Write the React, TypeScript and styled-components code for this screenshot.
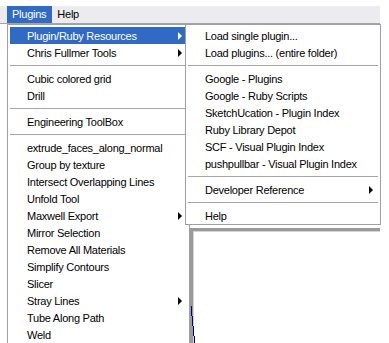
import React from "react";
import styled, { createGlobalStyle } from "styled-components";

const GlobalStyle = createGlobalStyle`
  html, body { margin: 0; padding: 0; background: #ffffff; }
  body {
    font-family: "Liberation Sans", Arial, sans-serif;
    font-size: 11px;
    letter-spacing: -0.25px;
    color: #000;
  }
  * { box-sizing: border-box; }
`;

const Page = styled.div`
  position: relative;
  width: 389px;
  height: 343px;
  overflow: hidden;
  background: #ffffff;
`;

const TopGap = styled.div`
  height: 6px;
`;

const MenuBar = styled.div`
  display: flex;
  width: 380px;
  height: 18px;
  padding-left: 7px;
  background: #ecebef;
  border-bottom: 1px solid #a4a4a4;
`;

const BarItem = styled.div<{ $active?: boolean }>`
  height: 17px;
  line-height: 17px;
  padding: 0 6px 0 5px;
  background: ${(p) => (p.$active ? "#316ac5" : "transparent")};
  color: ${(p) => (p.$active ? "#ffffff" : "#000000")};
`;

const Workspace = styled.div`
  display: flex;
  padding: 204px 0 0 190px;
`;

const Viewport = styled.div`
  position: relative;
  width: 190px;
  height: 140px;
  border-top: 3px solid #9a9a9a;
  border-left: 3px solid #9a9a9a;
  box-shadow: inset 1px 1px 0 #d4d4d4;
  background: #ffffff;
`;

const EdgeLine = styled.svg`
  position: absolute;
  left: -2px;
  top: 75px;
`;

const Menu = styled.div<{ $left: number; $top: number; $width: number }>`
  position: absolute;
  left: ${(p) => p.$left}px;
  top: ${(p) => p.$top}px;
  width: ${(p) => p.$width}px;
  padding: 2px 2px 0;
  background: #ffffff;
  border: 1px solid #a0a0a0;
`;

const Item = styled.div<{ $active?: boolean }>`
  display: flex;
  align-items: center;
  justify-content: space-between;
  height: 17px;
  padding: 0 5px 0 17px;
  white-space: nowrap;
  background: ${(p) => (p.$active ? "#316ac5" : "transparent")};
  color: ${(p) => (p.$active ? "#ffffff" : "#000000")};
`;

const Separator = styled.div`
  height: 9px;
  display: flex;
  align-items: center;
  &::after {
    content: "";
    flex: 1;
    height: 1px;
    background: #a6a6a6;
  }
`;

const Arrow = styled.span<{ $active?: boolean }>`
  width: 0;
  height: 0;
  border-top: 4px solid transparent;
  border-bottom: 4px solid transparent;
  border-left: 4px solid ${(p) => (p.$active ? "#ffffff" : "#000000")};
`;

type Entry = { label?: string; sub?: boolean; active?: boolean; sep?: boolean };

const leftItems: Entry[] = [
  { label: "Plugin/Ruby Resources", sub: true, active: true },
  { label: "Chris Fullmer Tools", sub: true },
  { sep: true },
  { label: "Cubic colored grid" },
  { label: "Drill" },
  { sep: true },
  { label: "Engineering ToolBox" },
  { sep: true },
  { label: "extrude_faces_along_normal" },
  { label: "Group by texture" },
  { label: "Intersect Overlapping Lines" },
  { label: "Unfold Tool" },
  { label: "Maxwell Export", sub: true },
  { label: "Mirror Selection" },
  { label: "Remove All Materials" },
  { label: "Simplify Contours" },
  { label: "Slicer" },
  { label: "Stray Lines", sub: true },
  { label: "Tube Along Path" },
  { label: "Weld" },
];

const subItems: Entry[] = [
  { label: "Load single plugin..." },
  { label: "Load plugins... (entire folder)" },
  { sep: true },
  { label: "Google - Plugins" },
  { label: "Google - Ruby Scripts" },
  { label: "SketchUcation - Plugin Index" },
  { label: "Ruby Library Depot" },
  { label: "SCF - Visual Plugin Index" },
  { label: "pushpullbar - Visual Plugin Index" },
  { sep: true },
  { label: "Developer Reference", sub: true },
  { sep: true },
  { label: "Help" },
];

function MenuList({ items }: { items: Entry[] }) {
  return (
    <>
      {items.map((e, i) =>
        e.sep ? (
          <Separator key={i} />
        ) : (
          <Item key={i} $active={e.active}>
            <span>{e.label}</span>
            {e.sub && <Arrow $active={e.active} />}
          </Item>
        )
      )}
    </>
  );
}

export default function App() {
  return (
    <Page>
      <GlobalStyle />
      <TopGap />
      <MenuBar>
        <BarItem $active>Plugins</BarItem>
        <BarItem>Help</BarItem>
      </MenuBar>
      <Workspace>
        <Viewport>
          <EdgeLine width="6" height="40" viewBox="0 0 6 40">
            <rect x="0" y="0" width="1" height="10" fill="#000080" />
            <rect x="1" y="10" width="1" height="10" fill="#000080" />
            <rect x="2" y="20" width="1" height="10" fill="#000080" />
            <rect x="3" y="30" width="1" height="10" fill="#000080" />
          </EdgeLine>
        </Viewport>
      </Workspace>
      <Menu $left={7} $top={24} $width={183}>
        <MenuList items={leftItems} />
      </Menu>
      <Menu $left={185} $top={24} $width={196}>
        <MenuList items={subItems} />
      </Menu>
    </Page>
  );
}
